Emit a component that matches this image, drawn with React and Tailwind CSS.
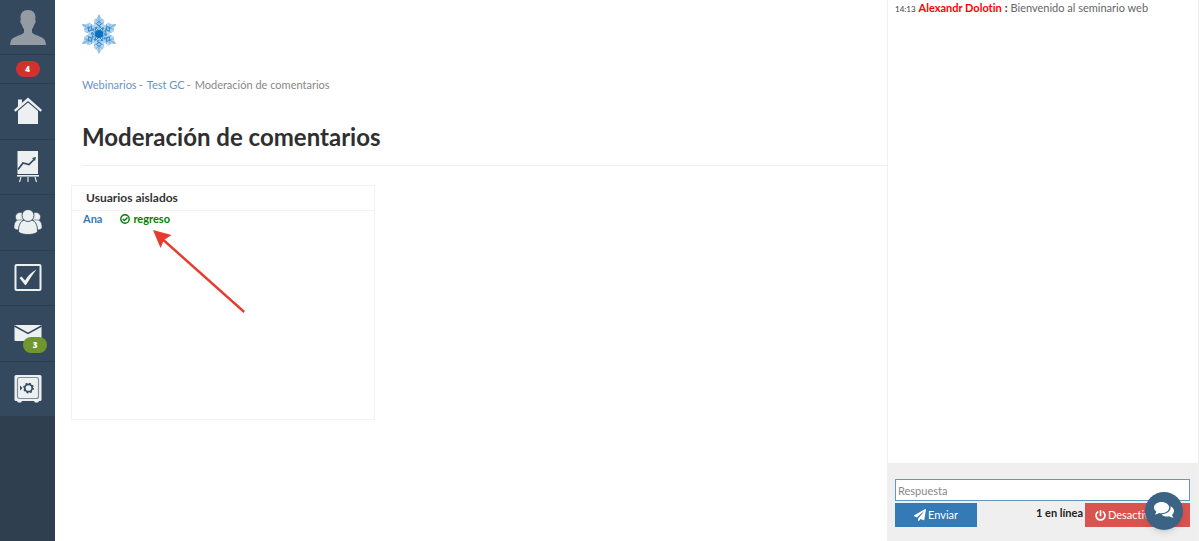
import React from 'react';
import { FaPaperPlane, FaPowerOff } from 'react-icons/fa';

const HomeIcon = () => (
  <svg viewBox="0 0 28 28" className="w-7 h-7" fill="#ecf0f1">
    <path d="M4 2.500h4v4L4 10z" />
    <path d="M14 .500 0 13l1.500 1.800L14 4l12.500 10.800L28 13z" />
    <path d="M14 5.500 4 14V27h20V14z" />
  </svg>
);

const ChartIcon = () => (
  <svg viewBox="0 0 28 32" className="w-7 h-8" fill="none">
    <path d="M3.500 0h20.500v23H3.500z" fill="#ecf0f1" />
    <path d="M3 24.800h22" stroke="#ecf0f1" strokeWidth="1.600" />
    <path d="M7 26l-1.500 5M14 26v5M21 26l1.500 5" stroke="#ecf0f1" strokeWidth="1.100" />
    <path d="M4 18.500 9 12l6 1.500L20.500 8" stroke="#34495e" strokeWidth="1.700" />
    <path d="m18 7 4-1-1 4z" fill="#34495e" />
  </svg>
);

const UsersIcon = () => (
  <svg viewBox="0 0 28 26" className="w-7 h-[26px]" fill="#ecf0f1" stroke="#34495e">
    <circle cx="6" cy="8" r="4.500" strokeWidth="0.500" />
    <circle cx="22" cy="8" r="4.500" strokeWidth="0.500" />
    <path d="M0 19c0-5 1.500-8 5-8h4v10H6c-3 0-5-.5-6-2z" strokeWidth="0.500" />
    <path d="M28 19c0-5-1.500-8-5-8h-4v10h3c3 0 5-.5 6-2z" strokeWidth="0.500" />
    <path d="M4.500 22.500c0-7 2-12 9.500-12s9.500 5 9.500 12c-1 2-5 3-9.500 3s-8.500-1-9.500-3z" strokeWidth="0.900" />
    <circle cx="14" cy="6.500" r="6" strokeWidth="0.900" />
  </svg>
);

const TaskIcon = () => (
  <svg viewBox="0 0 28 28" className="w-7 h-7" fill="none">
    <rect x="1.500" y="1" width="25" height="25" rx="1" stroke="#ecf0f1" strokeWidth="2" />
    <path d="M5.500 14 7.500 12.500l3.500 4C14 11.500 18 8 22.500 5.500 18.500 10.500 15.500 15.500 12 21h-1z" fill="#ecf0f1" />
  </svg>
);

const MailIcon = () => (
  <svg viewBox="0 0 28 18" className="w-7 h-[18px]" fill="none">
    <rect x="0.500" y="1" width="27" height="16" rx="1" fill="#ecf0f1" />
    <path d="m.500 2 13.500 7.500L27.500 2" stroke="#34495e" strokeWidth="1.500" />
  </svg>
);

const SafeIcon = () => (
  <svg viewBox="0 0 28 28" className="w-7 h-7" fill="none">
    <rect x="0.500" y="0" width="27" height="26" rx="1.500" fill="#ecf0f1" />
    <path d="M3 26h5l-1 1.500H4zM20 26h5l-1 1.500h-3z" fill="#ecf0f1" />
    <rect x="3.500" y="2.500" width="21" height="21" rx="2" stroke="#7f8d9a" strokeWidth="1.200" />
    <circle cx="14.500" cy="13" r="3.700" stroke="#34495e" strokeWidth="1.700" />
    <circle cx="14.500" cy="13" r="4.800" stroke="#34495e" strokeWidth="1.200" strokeDasharray="1.900 1.870" />
    <path d="m6 10.500 2.500 2.500L6 15.500z" fill="#34495e" />
  </svg>
);

const Snowflake = () => (
  <svg viewBox="-20 -20 40 40" className="w-10 h-10" fill="none">
    {[0, 60, 120, 180, 240, 300].map((angle) => (
      <g key={angle} transform={`rotate(${angle})`}>
        <path d="M0-20-3-15-5.500-14-4.500-10-6-8 0-2 6-8 4.500-10 5.500-14 3-15z" fill="#b5d4ee" />
        <path d="M0-19V0M-3.500-15 0-12l3.500-3M-5-11.500 0-8l5-3.500" stroke="#6facdc" strokeWidth="0.900" />
        <path d="M-4-7 0-3l4-4M-2.500-10.500 0-12.500l2.500 2L0-8z" stroke="#2c86cc" strokeWidth="1" />
      </g>
    ))}
    <circle r="7" stroke="#3a90d2" strokeWidth="1.500" strokeDasharray="2 1.660" />
    <circle r="4" fill="#0870bf" />
  </svg>
);

const CheckIcon = () => (
  <svg viewBox="0 0 10 10" className="w-[10px] h-[10px]" fill="none" stroke="currentColor" strokeWidth="1.400">
    <circle cx="5" cy="5" r="4.200" />
    <path d="m2.800 4.900 1.700 1.700L7.500 3.600" />
  </svg>
);

const ChatIcon = () => (
  <svg viewBox="0 0 20 18" className="w-5 h-[18px]" fill="currentColor">
    <path d="M7.500 0C11.600 0 15.200 2.400 15.200 5.600s-3.500 5.700-7.700 5.700c-.8 0-1.600-.1-2.300-.3C4 11.900 2.500 12.400.800 12.400c.9-.9 1.400-1.700 1.600-2.600C.9 8.800 0 7.200 0 5.600 0 2.400 3.400 0 7.500 0z" />
    <path d="M16.400 4.300C18.600 5.200 20 7 20 9.100c0 1.400-.8 2.800-2 3.800.2.900.7 1.700 1.500 2.600-1.600 0-3-.5-4.200-1.300-.7.200-1.400.3-2.200.3-2.400 0-4.500-.9-5.700-2.300 5 .2 9.200-2.600 9.200-6.600 0-.4 0-.9-.2-1.300z" />
  </svg>
);

const menu = [
  { label: 'Inicio', icon: <HomeIcon /> },
  { label: 'Estadísticas', icon: <ChartIcon /> },
  { label: 'Usuarios', icon: <UsersIcon /> },
  { label: 'Tareas', icon: <TaskIcon /> },
  { label: 'Mensajes', icon: <MailIcon />, count: 3 },
  { label: 'Pagos', icon: <SafeIcon /> },
];

const Sidebar = () => (
  <nav className="w-[55px] shrink-0 bg-[#2f3f50]">
    <a href="#perfil" aria-label="Perfil" className="flex h-[55px] items-center justify-center bg-[#34495e] border-b border-[#2c3e50]">
      <svg viewBox="0 0 36 35" className="w-9 h-[35px]" fill="#959ba3">
        <path d="M18 0c5 0 7.500 3 7.500 7.500l-.3 2.500c1 .5.500 3.500-1 4.500-.5 2-1.200 3.500-2.200 4.500v3.500c1.500 3 13 3.500 13.500 9.500l.5 3H0l.5-3C1 26 12.500 25.500 14 22.500V19c-1-1-1.700-2.500-2.200-4.500-1.500-1-2-4-1-4.500l-.3-2.500C10.500 3 13 0 18 0z" />
      </svg>
    </a>
    <a href="#avisos" className="flex h-7 items-center justify-center bg-[#34495e]">
      <span className="w-6 rounded-full bg-[#d2322d] text-center font-['Open_Sans',sans-serif] text-[8px] leading-4 font-extrabold text-white">4</span>
    </a>
    <ul className="flex h-[333px] flex-col">
      {menu.map((item) => (
        <li key={item.label} className="flex-1 bg-[#34495e] border-t border-[#2c3e50]">
          <a href="#menu" aria-label={item.label} className="relative flex h-full items-center justify-center">
            {item.icon}
            {item.count && (
              <span className="absolute right-2 bottom-2 w-6 rounded-full bg-[#72962e] text-center font-['Open_Sans',sans-serif] text-[8px] leading-4 font-extrabold text-white">
                {item.count}
              </span>
            )}
          </a>
        </li>
      ))}
    </ul>
  </nav>
);

const IsolatedUsers = () => (
  <section className="relative ml-4 mt-[19px] w-[304px] min-h-[235px] border border-[#f2f2f2] font-bold">
    <h2 className="border-b border-[#f2f2f2] px-[14px] text-xs leading-6 text-[#333]">Usuarios aislados</h2>
    <div className="flex gap-[18px] px-[11px] text-[11px] leading-4">
      <a href="#ana" className="text-[#337ab7]">Ana</a>
      <button className="flex items-center gap-[3px] text-[#008000]">
        <CheckIcon />
        regreso
      </button>
    </div>
    <svg viewBox="0 0 92 84" className="absolute left-[81px] top-[44px] w-[92px] h-[84px]" fill="#e63c2f">
      <path d="m10 8 82 73-1.500 2L8.500 10z" />
      <path d="M0 0 18.500 5 11 10 7.500 18z" />
    </svg>
  </section>
);

const ChatPanel = () => (
  <aside className="flex w-[312px] shrink-0 flex-col border-x border-[#f0f0f0] text-[11px]">
    <p className="flex flex-1 items-baseline gap-[3px] px-[7px] leading-4 text-[#666]">
      <span className="text-[8px] text-[#444]">14:13</span>
      <b className="text-[#f00]">Alexandr Dolotin</b>
      <b className="text-[#333]">:</b>
      <span>Bienvenido al seminario web</span>
    </p>
    <form className="bg-[#efefef] pl-[7px] pr-2 pt-4 pb-[14px]">
      <input
        type="text"
        aria-label="Respuesta"
        placeholder="Respuesta"
        className="block h-[22px] w-full border border-[#6495c5] bg-white px-0.5 placeholder:text-[#888] outline-none"
      />
      <div className="mt-0.5 flex h-6 text-white">
        <button type="button" className="flex w-[82px] items-center justify-center gap-0.5 bg-[#337ab7]">
          <FaPaperPlane className="w-3 h-3" />
          Enviar
        </button>
        <span className="ml-auto mr-0.5 leading-5 font-bold text-[#222]">1 en línea</span>
        <button type="button" className="flex w-[105px] items-center gap-0.5 whitespace-nowrap bg-[#d9534f] pl-[10px]">
          <FaPowerOff className="w-[11px] h-[11px]" />
          Desactivar
        </button>
      </div>
    </form>
  </aside>
);

const App = () => {
  return (
    <div className="flex min-h-screen bg-white font-['Lato',sans-serif] [font-variant-ligatures:none]">
      <Sidebar />
      <main className="min-w-0 flex-1">
        <header className="ml-[27px] pt-[14px]">
          <a href="#inicio" aria-label="Inicio" className="inline-block -ml-[3px] align-top">
            <Snowflake />
          </a>
          <div className="mt-[23px] flex gap-0.5 text-[11px] leading-4 text-[#888]">
            <a href="#webinarios" className="text-[#6a93c4]">Webinarios</a>
            <span className="mr-0.5">-</span>
            <a href="#test" className="text-[#6a93c4]">Test GC</a>
            <span className="mr-0.5">-</span>
            <span>Moderación de comentarios</span>
          </div>
          <h1 className="mt-7 border-b border-[#f0f0f0] pb-3 text-2xl leading-8 font-bold text-[#2f2f2f]">
            Moderación de comentarios
          </h1>
        </header>
        <IsolatedUsers />
      </main>
      <ChatPanel />
      <button
        aria-label="Abrir chat"
        className="fixed right-4 bottom-[11px] flex h-[38px] w-[38px] items-center justify-center rounded-full bg-[#3b6484] text-white shadow-md"
      >
        <ChatIcon />
      </button>
    </div>
  );
};

export default App;
